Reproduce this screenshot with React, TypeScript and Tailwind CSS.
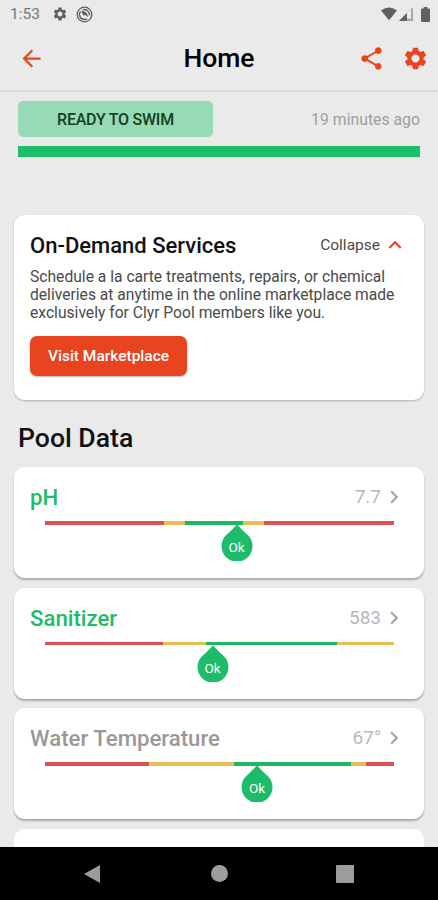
import { MdArrowBack, MdChevronRight, MdKeyboardArrowUp, MdSettings, MdShare } from "react-icons/md";

const READINGS = [
  {
    name: "pH",
    value: "7.7",
    color: "text-[#1cbc68]",
    marker: 191.5,
    zones: [
      ["bg-[#dc5050]", 119],
      ["bg-[#e8bf56]", 21],
      ["bg-[#1cb964]", 58],
      ["bg-[#e8bf56]", 21],
      ["bg-[#dc5050]", 130],
    ],
  },
  {
    name: "Sanitizer",
    value: "583",
    color: "text-[#1cbc68]",
    marker: 167.5,
    zones: [
      ["bg-[#dc5050]", 118],
      ["bg-[#e8bf56]", 42.5],
      ["bg-[#1cb964]", 131.5],
      ["bg-[#e8bf56]", 57],
    ],
  },
  {
    name: "Water Temperature",
    value: "67°",
    color: "text-[#999999]",
    marker: 212,
    zones: [
      ["bg-[#dc5050]", 103.5],
      ["bg-[#e8bf56]", 85.5],
      ["bg-[#1cb964]", 117],
      ["bg-[#e8bf56]", 14.5],
      ["bg-[#dc5050]", 28.5],
    ],
  },
] as const;

const StatusBar = () => (
  <div className="flex h-7 items-center pl-[10px] pr-[8px] text-[#606060]">
    <span className="w-[42px] pt-[2px] text-[15.5px] text-[#777]">1:53</span>
    <MdSettings className="size-[16px]" />
    <svg className="ml-[8px] size-[17px]" viewBox="0 0 17 17" fill="none" stroke="currentColor">
      <circle cx="8.5" cy="8.5" r="7.3" strokeWidth="1.3" />
      <path d="M4.6 5.3A5 5 0 0 0 8.5 13.5Q10 13.5 11 12.7M6.6 3.9A5 5 0 0 1 13.3 9.5" strokeWidth="1.3" />
      <path d="M5.3 5.2C8 4.5 11.8 6.5 12 11L9.6 9.1 7.3 9.4Z" fill="currentColor" stroke="none" />
    </svg>
    <svg className="ml-auto h-[14px] w-[16px]" viewBox="0 0 17 14" fill="currentColor">
      <path d="M0 3.2Q8.5-2.8 17 3.2L8.5 13.6Z" />
    </svg>
    <svg className="ml-[2px] h-[14px] w-[14px]" viewBox="0 0 14 14">
      <path d="M0 14 14 0V14Z" fill="#a9a9a9" />
      <path d="M8 6 12 2.5V11.5H8Z" fill="#eeeeee" />
      <path d="M0 14 8 6V14Z" fill="#606060" />
    </svg>
    <svg className="ml-[8px] h-[15px] w-[9px]" viewBox="0 0 9 15" fill="currentColor">
      <path d="M2.7 0h3.6v1.5H8q1 0 1 1V14q0 1-1 1H1q-1 0-1-1V2.5q0-1 1-1h1.7z" />
    </svg>
  </div>
);

const Header = () => (
  <header className="grid h-[64px] grid-cols-3 items-center border-b-2 border-[#d7d7d7] pb-[2px] text-[#e8441f]">
    <MdArrowBack className="ml-[18px] size-[27px]" />
    <h1 className="text-center text-[26.5px] font-medium text-black">Home</h1>
    <div className="flex justify-end gap-[17px] pr-[9px]">
      <MdShare className="size-[27px]" />
      <MdSettings className="size-[27px]" />
    </div>
  </header>
);

const ReadingCard = ({ reading }: { reading: (typeof READINGS)[number] }) => (
  <div className="h-[111px] shrink-0 rounded-[11px] bg-white pt-[14px] shadow-[0_2px_2px_rgba(0,0,0,0.28)]">
    <div className="flex h-8 items-center pl-[16px] pr-[17px]">
      <h3 className={`pt-[2px] text-[22.2px] font-medium ${reading.color}`}>{reading.name}</h3>
      <span className="ml-auto pt-px text-[19px] text-[#b8b8b8]">{reading.value}</span>
      <MdChevronRight className="size-[26px] text-[#a6a6a6]" />
    </div>
    <div className="relative ml-[31px] mt-[8px] w-[349px]">
      <div className="flex h-[3.5px]">
        {reading.zones.map(([bg, width], i) => (
          <div key={i} className={bg} style={{ width }} />
        ))}
      </div>
      {/* Marker drop */}
      <div
        className="absolute top-[3px] flex h-[37px] w-[32px] -translate-x-1/2 justify-center"
        style={{ left: reading.marker }}
      >
        <svg className="absolute inset-0" width="32" height="37" viewBox="0 0 32 37">
          <path
            d="M15.3 .9Q16 .2 16.700 .9C19.500 4.500 23 7.500 26.500 10.700A15.500 15.500 0 1 1 5.500 10.700C9 7.500 12.500 4.500 15.300 .9Z"
            fill="#1cbc68"
          />
        </svg>
        <span className="relative pt-[14px] text-[13.5px] leading-[18px] text-white">Ok</span>
      </div>
    </div>
  </div>
);

export default function App() {
  return (
    <div className="flex h-[900px] w-[438px] flex-col overflow-hidden bg-[#eaeaea] font-['Roboto',sans-serif]">
      <StatusBar />
      <Header />

      <main className="flex min-h-0 flex-1 flex-col overflow-hidden px-[14px]">
        <div className="mx-1 mt-[9px] flex h-[36px] shrink-0 items-center justify-between">
          <div className="flex h-full w-[195px] items-center justify-center rounded-[5px] bg-[#98dab5] pt-[2px] text-[16px] font-medium tracking-[-0.25px] text-[#14401f]">
            READY TO SWIM
          </div>
          <span className="pt-[2px] text-[15.8px] text-[#a0a0a0]">19 minutes ago</span>
        </div>
        <div className="mx-1 mt-[9px] h-[11px] shrink-0 bg-[#1cbf68]" />

        <section className="mt-[58px] h-[185px] shrink-0 rounded-[11px] bg-white px-[16px] pt-[15px] shadow-[0_1px_2px_rgba(0,0,0,0.25)]">
          <div className="flex h-[30px] items-center">
            <h2 className="text-[22px] font-medium text-[#111]">On-Demand Services</h2>
            <span className="ml-auto pt-[2px] text-[15.5px] text-[#4a4a4a]">Collapse</span>
            <MdKeyboardArrowUp className="ml-[2px] size-[26px] text-[#e8441f]" />
          </div>
          <p className="mt-[8px] whitespace-nowrap text-[15.65px] leading-[18px] text-[#4a4a4a]">
            Schedule a la carte treatments, repairs, or chemical
            <br />
            deliveries at anytime in the online marketplace made
            <br />
            exclusively for Clyr Pool members like you.
          </p>
          <button className="mt-[14px] flex h-[40px] w-[157px] items-center justify-center rounded-[7px] bg-[#e8441f] pt-[2px] text-[15.5px] font-medium text-white shadow-[0_1px_2px_rgba(0,0,0,0.3)]">
            Visit Marketplace
          </button>
        </section>

        <h2 className="ml-1 mt-[18px] h-[40px] shrink-0 text-[26.6px] font-medium leading-[40px] text-[#111]">
          Pool Data
        </h2>
        <div className="mt-[9px] flex flex-col gap-[9.5px]">
          {READINGS.map((r) => (
            <ReadingCard key={r.name} reading={r} />
          ))}
          <div className="h-[111px] shrink-0 rounded-[11px] bg-white" />
        </div>
      </main>

      <nav className="flex h-[53px] items-center bg-black pl-[84px] text-[#9c9c9c]">
        <svg className="h-[18px] w-[16px]" viewBox="0 0 16 18" fill="currentColor">
          <path d="M16 0V18L0 9Z" />
        </svg>
        <div className="ml-[111px] size-[17px] rounded-full bg-[#9c9c9c]" />
        <div className="ml-[108px] size-[18px] rounded-[1px] bg-[#9c9c9c]" />
      </nav>
    </div>
  );
}
